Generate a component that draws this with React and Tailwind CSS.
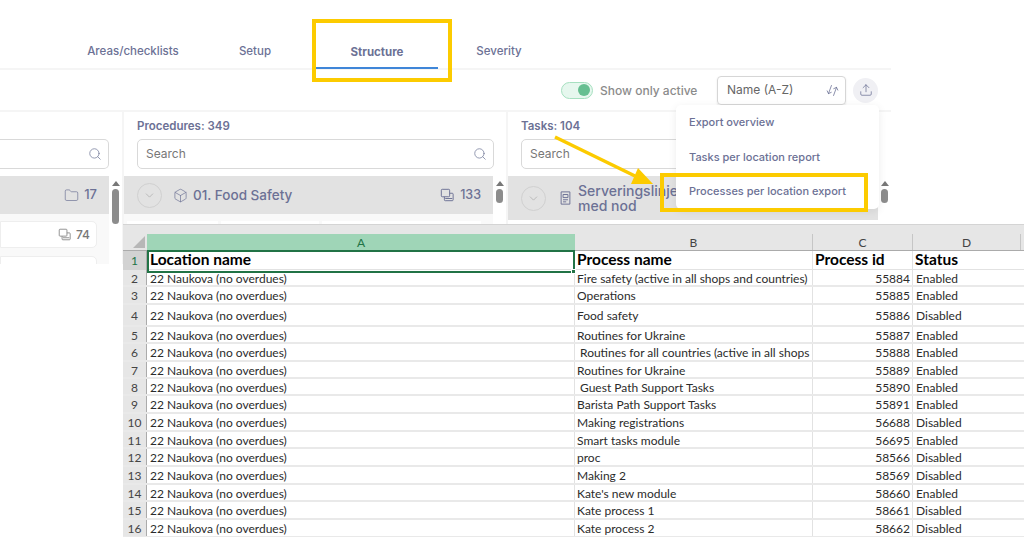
import React from 'react';
import { Search, ChevronDown, Folder, Box, ArrowDownUp, Upload } from 'lucide-react';

const TABS = [
  { label: 'Areas/checklists' },
  { label: 'Setup' },
  { label: 'Structure', active: true },
  { label: 'Severity' },
];

const LOC = '22 Naukova (no overdues)';

const ROWS = [
  { h: 'h-[17px]', name: 'Fire safety (active in all shops and countries)', id: 55884, status: 'Enabled' },
  { h: 'h-[18px]', name: 'Operations', id: 55885, status: 'Enabled' },
  { h: 'h-[22px]', name: 'Food safety', id: 55886, status: 'Disabled' },
  { h: 'h-[17px]', name: 'Routines for Ukraine', id: 55887, status: 'Enabled' },
  { h: 'h-[18px]', name: 'Routines for all countries (active in all shops', id: 55888, status: 'Enabled', indent: true },
  { h: 'h-[17px]', name: 'Routines for Ukraine', id: 55889, status: 'Enabled' },
  { h: 'h-[17px]', name: 'Guest Path Support Tasks', id: 55890, status: 'Enabled', indent: true },
  { h: 'h-[18px]', name: 'Barista Path Support Tasks', id: 55891, status: 'Enabled' },
  { h: 'h-[18px]', name: 'Making registrations', id: 56688, status: 'Disabled' },
  { h: 'h-[17px]', name: 'Smart tasks module', id: 56695, status: 'Enabled' },
  { h: 'h-[18px]', name: 'proc', id: 58566, status: 'Disabled' },
  { h: 'h-[18px]', name: 'Making 2', id: 58569, status: 'Disabled' },
  { h: 'h-[17px]', name: "Kate's new module", id: 58660, status: 'Enabled' },
  { h: 'h-[18px]', name: 'Kate process 1', id: 58661, status: 'Disabled' },
  { h: 'h-[18px]', name: 'Kate process 2', id: 58662, status: 'Disabled' },
];

const COLS = 'grid grid-cols-[24px_428px_238px_100px_108px_1fr]';

const CopyIcon = ({ className }) => (
  <svg viewBox="0 0 16 16" fill="none" stroke="currentColor" strokeWidth="1.1" className={className}>
    <rect x="1.5" y="1.5" width="9.5" height="8.5" rx="1" />
    <path d="M5 10v3.5a1 1 0 0 0 1 1h8a1 1 0 0 0 1-1V7a1 1 0 0 0-1-1h-3" />
    <path d="M6 12h8" />
  </svg>
);

const DocIcon = ({ className }) => (
  <svg viewBox="0 0 12 16" fill="none" stroke="currentColor" strokeWidth="1.1" className={className}>
    <path d="M1 1h10v14H1z" />
    <path d="M3.2 4h5.6v3.5H3.2zM3.2 10h5.6M3.2 12.4h3.6" />
  </svg>
);

const Scrollbar = ({ thumb }) => (
  <div className="w-[13px] shrink-0 flex flex-col items-center pt-[5px] gap-[3px]">
    <div className="w-0 h-0 border-x-[4px] border-x-transparent border-b-[5px] border-b-[#777]" />
    <div className={`w-[7px] rounded-full bg-[#8c8c8c] ${thumb}`} />
  </div>
);

const SearchBox = ({ className, hideLabel }) => (
  <div className={`h-[30px] border border-[#d9d9d9] rounded-[5px] flex items-center justify-between pl-[8px] pr-[6px] text-[12px] text-[#777] bg-white ${className}`}>
    <span>{hideLabel ? '' : 'Search'}</span>
    <Search size={14} strokeWidth={1.4} className="text-[#7d84a0]" />
  </div>
);

const Chevron = () => (
  <div className="w-[25px] h-[25px] rounded-full border border-[#d0d0d0] flex items-center justify-center shrink-0">
    <ChevronDown size={13} strokeWidth={1.2} className="text-[#a5a5a5]" />
  </div>
);

const Sheet = () => (
  <div className="absolute left-[123px] top-[224px] right-0 bottom-0 overflow-hidden bg-white font-[Lato,sans-serif] text-[12px] text-[#2b2b2b] leading-none">
    <div className="h-[10px] bg-[#e6e6e6] border-t border-[#d4d4d4]" />
    <div className={`${COLS} h-[17px] bg-[#e6e6e6] border-b border-[#ababab] text-[12px] text-[#444]`}>
      <div className="flex items-end justify-end pr-[2px] pb-[2px]">
        <svg viewBox="0 0 12 12" className="w-[12px] h-[12px] text-[#b7b7b7]"><path d="M12 0v12H0z" fill="currentColor" /></svg>
      </div>
      <div className="bg-[#9fd5b7] text-[#217346] flex items-center justify-center pt-[2px]">A</div>
      <div className="flex items-center justify-center border-r border-[#c6c6c6] pt-[2px]">B</div>
      <div className="flex items-center justify-center border-r border-[#c6c6c6] pt-[2px]">C</div>
      <div className="flex items-center justify-center border-r border-[#c6c6c6] pt-[2px]">D</div>
      <div />
    </div>
    <div className={`${COLS} h-[19px] border-b border-[#e2e2e2] text-[15.5px] font-bold text-black`}>
      <div className="bg-[#d2d2d2] text-[#217346] text-[12px] font-normal flex items-center justify-center border-r border-[#ababab]">1</div>
      <div className="relative border-2 border-[#217346] -my-[1px] flex items-center pl-[1px] pb-[3px]">
        Location name
        <div className="absolute -right-[3px] -bottom-[3px] w-[5px] h-[5px] bg-[#217346] border border-white" />
      </div>
      <div className="flex items-center pl-[2px] pb-[3px] border-r border-[#e2e2e2]">Process name</div>
      <div className="flex items-center pl-[2px] pb-[3px] border-r border-[#e2e2e2]">Process id</div>
      <div className="flex items-center pl-[2px] pb-[3px]">Status</div>
      <div />
    </div>
    {ROWS.map((r, i) => (
      <div key={r.id} className={`${COLS} ${r.h} border-b-2 border-[#e9e9e9]`}>
        <div className="bg-[#e6e6e6] text-[#444] text-[12px] flex items-center justify-center border-r border-[#ababab] pt-[2px]">{i + 2}</div>
        <div className="flex items-center pl-[3px] pt-[2px] border-r border-[#e2e2e2] whitespace-nowrap">{LOC}</div>
        <div className={`flex items-center pt-[2px] border-r border-[#e2e2e2] whitespace-nowrap overflow-hidden ${r.indent ? 'pl-[5px]' : 'pl-[2px]'}`}>{r.name}</div>
        <div className="flex items-center justify-end pr-[2px] pt-[2px] border-r border-[#e2e2e2]">{r.id}</div>
        <div className="flex items-center pl-[3px] pt-[2px] whitespace-nowrap">{r.status}</div>
        <div />
      </div>
    ))}
  </div>
);

const App = () => {
  return (
    <div className="relative w-[1024px] h-[537px] overflow-hidden bg-white font-[Inter,sans-serif] text-[#6c7195]">
      <div className="w-[891px]">
        {/* tabs */}
        <div className="h-[70px] flex pl-[72px] items-end border-b-2 border-[#f5f5f5]">
          {TABS.map((t) => (
            <div key={t.label} className={`w-[122px] h-[40px] flex items-start justify-center pt-[15px] text-[11.5px] ${t.active ? 'font-bold border-b-2 border-[#3f86d8] -mb-[1px]' : 'font-medium'}`}>
              {t.label}
            </div>
          ))}
        </div>

        {/* toolbar */}
        <div className="h-[42px] flex items-center justify-end pr-[13px] border-b-2 border-[#f5f5f5]">
          <div className="w-[32px] h-[17px] rounded-full bg-[#e6f7ee] border border-[#a6e0c0] flex items-center justify-end pr-[2px]">
            <div className="w-[12px] h-[12px] rounded-full bg-[#66bf91]" />
          </div>
          <span className="ml-[7px] mr-[20px] pt-[2px] text-[12px] text-[#8b8b8b] font-medium w-[97px] whitespace-nowrap">Show only active</span>
          <div className="w-[129px] h-[29px] border border-[#d6d6d6] rounded-[4px] flex items-center justify-between pl-[9px] pr-[6px] text-[12px] text-[#666] shadow-[0_1px_2px_rgba(0,0,0,0.1)]">
            Name (A-Z)
            <ArrowDownUp size={13} strokeWidth={1.3} className="text-[#6c7195] rotate-[20deg]" />
          </div>
          <div className="ml-[7px] w-[25px] h-[25px] rounded-full bg-[#f0f0f4] flex items-center justify-center">
            <Upload size={14} strokeWidth={1.3} />
          </div>
        </div>

        {/* columns */}
        <div className="flex h-[152px]">
          <div className="w-[124px] shrink-0 border-r-2 border-[#f5f5f5] flex flex-col">
            <div className="pt-[27px] pr-[13px]">
              <SearchBox hideLabel className="rounded-l-none border-l-0" />
            </div>
            <div className="mt-[7px] flex flex-1 min-h-0">
              <div className="flex-1 min-w-0 flex flex-col">
                <div className="h-[38px] bg-[#e2e2e2] flex items-center justify-end gap-[5px] pr-[12px] text-[13px] font-medium">
                  <Folder size={15} strokeWidth={1.1} />
                  17
                </div>
                <div className="flex-1 bg-[#f9f9f9] pr-[12px] pt-[7px] flex flex-col gap-[8px] overflow-hidden">
                  <div className="h-[27px] shrink-0 bg-white border border-[#eee] rounded-r-[5px] flex items-center justify-end gap-[5px] pr-[6px] text-[12px] text-[#777] font-medium">
                    <CopyIcon className="w-[13px] h-[13px] text-[#888]" />
                    74
                  </div>
                  <div className="h-[27px] shrink-0 bg-white border border-[#eee] rounded-r-[5px]" />
                </div>
              </div>
              <Scrollbar thumb="h-[35px]" />
            </div>
          </div>

          <div className="w-[384px] shrink-0 border-r-2 border-[#f5f5f5] flex flex-col">
            <div className="pl-[13px] pr-[12px] pt-[8px]">
              <div className="h-[19px] text-[11.5px] font-semibold leading-[12px]">Procedures: 349</div>
              <SearchBox />
            </div>
            <div className="mt-[7px] flex flex-1 min-h-0">
              <div className="flex-1 min-w-0 flex flex-col">
                <div className="h-[38px] bg-[#e2e2e2] flex items-center pl-[13px] pr-[12px] text-[13.5px] font-medium">
                  <Chevron />
                  <Box size={15} strokeWidth={1.1} className="ml-[11px] mr-[5px]" />
                  01. Food Safety
                  <CopyIcon className="w-[14px] h-[14px] ml-auto mr-[6px]" />
                  <span className="text-[12.5px]">133</span>
                </div>
                <div className="flex-1 bg-[#f9f9f9] pt-[7px] pl-[3px] flex gap-[3px]">
                  <div className="w-[91px] bg-white" />
                  <div className="w-[98px] bg-white" />
                  <div className="flex-1 mr-[12px] bg-white" />
                </div>
              </div>
              <Scrollbar thumb="h-[14px]" />
            </div>
          </div>

          <div className="flex-1 min-w-0 flex flex-col">
            <div className="pl-[13px] pr-[12px] pt-[8px]">
              <div className="h-[19px] text-[11.5px] font-semibold leading-[12px]">Tasks: 104</div>
              <SearchBox />
            </div>
            <div className="mt-[7px] flex">
              <div className="flex-1 min-w-0 h-[44px] bg-[#e2e2e2] flex items-center pl-[13px]">
                <Chevron />
                <DocIcon className="w-[11px] h-[14px] ml-[14px] mr-[7px] shrink-0" />
                <span className="text-[14px] font-medium leading-[15px]">Serveringslinje<br />med nod</span>
              </div>
              <Scrollbar thumb="h-[14px]" />
            </div>
          </div>
        </div>
      </div>

      <Sheet />

      {/* export menu */}
      <div className="absolute left-[676px] top-[105px] w-[203px] h-[104px] bg-white rounded-[5px] shadow-[0_2px_8px_rgba(0,0,0,0.08)] pl-[13px] pt-[7px] flex flex-col text-[11px] font-medium">
        <div className="h-[35px] pt-[2px]">Export overview</div>
        <div className="h-[34px] pt-[2px]">Tasks per location report</div>
        <div className="pt-[2px]">Processes per location export</div>
      </div>

      {/* annotations */}
      <div className="absolute left-[312px] top-[19px] w-[140px] h-[63px] border-[4px] border-[#fccb00]" />
      <div className="absolute left-[660px] top-[173px] w-[208px] h-[39px] border-[4px] border-[#fccb00]" />
      <svg className="absolute left-[550px] top-[130px] w-[110px] h-[60px]" viewBox="0 0 110 60">
        <path d="M5 7 L85 46" stroke="#fccb00" strokeWidth="3.5" />
        <path d="M103 54 L81 54 L88 38 Z" fill="#fccb00" />
      </svg>
    </div>
  );
};

export default App;
